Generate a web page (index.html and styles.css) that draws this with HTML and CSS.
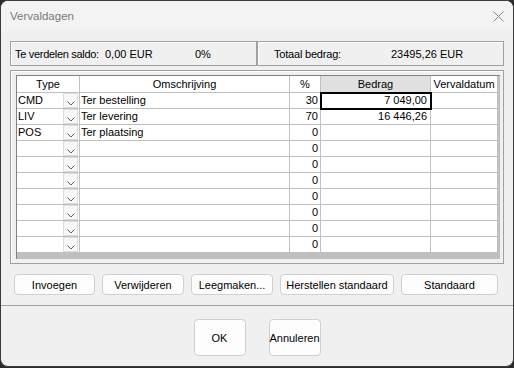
FILE: index.html
```html
<html lang="nl">
<head>
	<meta charset="UTF-8">
	<title>Vervaldagen</title>
	<link rel="stylesheet" href="styles.css">
</head>
<body>
	<div class="dlg">
		<div class="cap">
			<span class="capText">Vervaldagen</span>
			<svg class="close" width="11" height="11" viewBox="0 0 11 11">
				<path d="M0.5 0.5 L10.5 10.5 M10.5 0.5 L0.5 10.5" stroke="#8a8a8a" stroke-width="1" fill="none"/>
			</svg>
		</div>

		<div class="sum">
			<div class="sumBox">
				<span class="lblSaldo">Te verdelen saldo:</span>
				<span class="valSaldo">0,00 EUR</span>
				<span>0%</span>
			</div>
			<div class="sumBox right">
				<span class="lblTotaal">Totaal bedrag:</span>
				<span>23495,26 EUR</span>
			</div>
		</div>

		<div class="grp">
			<div class="grid">
				<div class="row hd">
					<div class="c span2">Type</div>
					<div class="c">Omschrijving</div>
					<div class="c">%</div>
					<div class="c sel">Bedrag</div>
					<div class="c">Vervaldatum</div>
				</div>
				<div id="rows"></div>
			</div>
		</div>

		<div class="btns">
			<span class="btn w1">Invoegen</span>
			<span class="btn w2">Verwijderen</span>
			<span class="btn w2">Leegmaken...</span>
			<span class="btn w3">Herstellen standaard</span>
			<span class="btn w4">Standaard</span>
		</div>

		<div class="sep"></div>

		<div class="foot">
			<span class="btn big">OK</span>
			<span class="btn big">Annuleren</span>
		</div>
	</div>

<script type="text/javascript">
var rowData = [
	{type: 'CMD', oms: 'Ter bestelling', pct: '30', bedrag: '7 049,00'},
	{type: 'LIV', oms: 'Ter levering', pct: '70', bedrag: '16 446,26'},
	{type: 'POS', oms: 'Ter plaatsing', pct: '0', bedrag: ''}
];
while (rowData.length < 10) {
	rowData.push({type: '', oms: '', pct: '0', bedrag: ''});
}

var chevron = '<svg width="8" height="5" viewBox="0 0 8 5"><polyline points="0.5,0.5 4,4 7.5,0.5" fill="none" stroke="#666" stroke-width="1"/></svg>';

var htmlStr = '';
rowData.forEach(function(ele, index){
	htmlStr = htmlStr + '<div class="row">'
		+ '<div class="c t">' + ele.type + '</div>'
		+ '<div class="c dd"><span class="ddBtn">' + chevron + '</span></div>'
		+ '<div class="c t">' + ele.oms + '</div>'
		+ '<div class="c num">' + ele.pct + '</div>'
		+ '<div class="c num bd' + (index == 0 ? ' focus' : '') + '">' + ele.bedrag + '</div>'
		+ '<div class="c"></div>'
		+ '</div>';
});
document.getElementById('rows').innerHTML = htmlStr;
</script>
</body>
</html>
```

FILE: styles.css
```css
*{
	margin: 0px;
	padding: 0px;
	box-sizing: border-box;
}

body{
	background: #2b2b2b;
	font-family: "Liberation Sans", Arial, sans-serif;
	font-size: 11px;
	color: #000;
}

.dlg{
	width: 514px;
	height: 367px;
	background: #f0f0f0;
	border: 1px solid #3c3c3c;
	border-radius: 8px;
	overflow: hidden;
}

.cap{
	height: 30px;
	background: #f3f3f3;
	display: flex;
	align-items: center;
	justify-content: space-between;
	padding: 0px 9px 0px 9px;
}

.capText{
	color: #7a7a7a;
	font-size: 11.5px;
}

.sum{
	display: flex;
	margin: 10px 9px 0px;
	height: 25px;
}

.sumBox{
	width: 247px;
	display: flex;
	align-items: center;
	padding-left: 4px;
	border: 1px solid #a0a0a0;
	box-shadow: inset 1px 1px 0px #fff;
	white-space: nowrap;
}

.sumBox.right{
	padding-left: 16px;
}

.lblSaldo{
	width: 90px;
	letter-spacing: -0.3px;
}

.valSaldo{
	width: 90px;
}

.lblTotaal{
	width: 117px;
	letter-spacing: -0.2px;
}

.grp{
	margin: 4px 9px 0px;
	height: 194px;
	border: 1px solid #a0a0a0;
	box-shadow: inset 1px 1px 0px #fff;
	padding: 4px 0px 0px 5px;
}

.grid{
	width: 484px;
	height: 184px;
	background: #bfbfbf;
	border-top: 1px solid #828282;
	border-left: 1px solid #828282;
}

.row{
	display: grid;
	grid-template-columns: 46px 17px 210px 31px 110px 67px;
	width: 481px;
	height: 16px;
	background: #fff;
}

.row .c{
	border-right: 1px solid #c0c0c0;
	border-bottom: 1px solid #c0c0c0;
	line-height: 15px;
	white-space: nowrap;
	overflow: hidden;
}

.row .c.t{
	padding-left: 1px;
}

.row .c:first-child{
	border-right: none;
}

.row.hd{
	height: 17px;
}

.row.hd .c{
	text-align: center;
	line-height: 16px;
}

.row.hd .c.span2{
	grid-column: span 2;
	border-right: 1px solid #c0c0c0;
}

.row.hd .c.sel{
	background: #e0e0e0;
}

.row .c.num{
	text-align: right;
	padding-right: 2px;
}

.row .c.bd{
	padding-right: 3px;
}

.row .c.focus{
	position: relative;
	outline: 2px solid #000;
	outline-offset: -1px;
	overflow: visible;
}

.row .c.dd{
	padding: 0px 1px 0px 0px;
}

.ddBtn{
	display: flex;
	justify-content: center;
	padding-top: 7px;
	height: 15px;
	background: #f7f7f7;
	border: 1px solid #dddddd;
}

.ddBtn svg{
	display: block;
}

.btns{
	display: flex;
	gap: 7px;
	padding-left: 13px;
	margin-top: 10px;
}

.btn{
	display: flex;
	align-items: center;
	justify-content: center;
	height: 21px;
	background: #fdfdfd;
	border: 1px solid #d0d0d0;
	border-radius: 4px;
	white-space: nowrap;
}

.btn.w1{
	width: 81px;
}

.btn.w2{
	width: 82px;
}

.btn.w3{
	width: 114px;
}

.btn.w4{
	width: 97px;
}

.sep{
	height: 1px;
	background: #a0a0a0;
	margin-top: 10px;
}

.foot{
	display: flex;
	justify-content: center;
	gap: 23px;
	margin-top: 13px;
}

.btn.big{
	width: 52px;
	height: 37px;
	overflow: visible;
}
```
